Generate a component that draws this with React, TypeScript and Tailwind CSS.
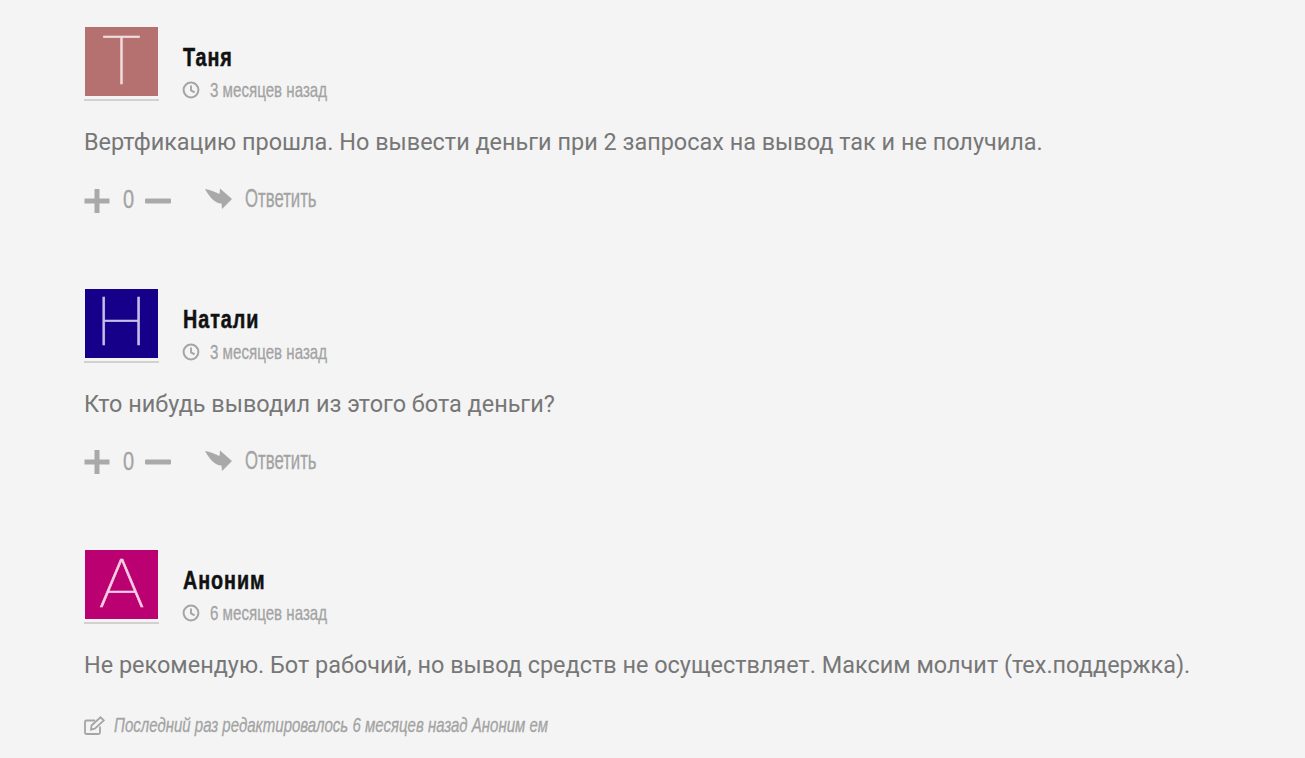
const cond = { fontFamily: '"Liberation Sans Narrow","Liberation Sans",sans-serif' };

function Clock() {
  return (
    <svg width="18" height="18" viewBox="0 0 18 18" fill="none" stroke="#a5a5a5" strokeWidth="2" className="shrink-0 -ml-[1px]">
      <circle cx="9" cy="9" r="7.4" />
      <path d="M9 4.4V9.4L12.6 11.4" strokeWidth="1.900" />
    </svg>
  );
}

function Plus() {
  return (
    <svg width="26" height="26" viewBox="0 0 26 26" fill="#a9a9a9" className="shrink-0">
      <path d="M10.500 1h5v9.500H25.500v5H15.500V25h-5V15.500H0.500v-5h10z" />
    </svg>
  );
}

function Minus() {
  return (
    <svg width="26" height="26" viewBox="0 0 26 26" fill="#a9a9a9" className="shrink-0">
      <rect x="0" y="10.500" width="26" height="5" rx="1" />
    </svg>
  );
}

function Reply() {
  return (
    <svg width="27" height="24" viewBox="0 0 27 24" fill="#a9a9a9" className="shrink-0">
      <path d="M0 2C5 2.500 10 5 14.500 7L15 1.500L27 12L17 22L16.500 16.500C9.500 16.500 4 9 0 2z" />
    </svg>
  );
}

function Edit() {
  return (
    <svg width="21" height="19" viewBox="0 0 21 19" fill="none" stroke="#a5a5a5" strokeWidth="1.800" className="shrink-0">
      <path d="M16 10.500V16.500a1.500 1.500 0 0 1-1.500 1.500H2.500A1.500 1.500 0 0 1 1 16.500V6a1.500 1.500 0 0 1 1.500-1.500H11" />
      <path d="M7.500 9.500L16.500 1.300L19.800 4.300L10.800 12.700L7 13.500z" />
    </svg>
  );
}

function Comment({ name, when, letter, color, letterClass, text, actions = true }: {
  name: string; when: string; letter: string; color: string; letterClass: string; text: string; actions?: boolean;
}) {
  return (
    <div className="flex flex-col">
      <div className="flex items-start">
        <div className="w-[75px] border-b-2 border-[#d5d0d0] pb-[3px] shrink-0 flex justify-center">
          <div className={`w-[73px] h-[69px] flex items-center justify-center ${color}`}>
            <span className={`text-[66px] leading-none [-webkit-text-stroke:0.5px_currentColor] ${letterClass}`} style={{ fontFamily: 'Roboto, sans-serif', fontWeight: 100 }}>
              {letter}
            </span>
          </div>
        </div>
        <div className="ml-[24px] pt-[16px] flex flex-col">
          <div className="h-[30px] flex items-center text-[25px] font-bold text-[#111] origin-left scale-x-[0.79] whitespace-nowrap tracking-[1.2px] [-webkit-text-stroke:0.5px_#111]" style={cond}>
            {name}
          </div>
          <div className="flex items-center h-[24px] mt-[5px]">
            <Clock />
            <span className="ml-[10px] text-[21px] text-[#a3a3a3] whitespace-nowrap scale-x-[0.72] origin-left [-webkit-text-stroke:0.3px_#a3a3a3]" style={cond}>{when}</span>
          </div>
        </div>
      </div>
      <p className="mt-[25px] text-[23.45px] leading-[30px] text-[#777] whitespace-nowrap" style={{ fontFamily: 'Roboto, sans-serif' }}>{text}</p>
      {actions && (
        <div className="mt-[27px] flex items-center h-[30px]">
          <span className="mt-[3px] -ml-[0.5px]"><Plus /></span>
          <span className="ml-[13px] w-[22px] text-[25px] text-[#a3a3a3] scale-x-[0.8] origin-left mt-[2px] [-webkit-text-stroke:0.3px_#a3a3a3]" style={cond}>0</span>
          <span className="mt-[3px]"><Minus /></span>
          <span className="ml-[34px]"><Reply /></span>
          <span className="ml-[13px] text-[25px] text-[#a3a3a3] scale-x-[0.67] origin-left whitespace-nowrap [-webkit-text-stroke:0.3px_#a3a3a3]" style={cond}>Ответить</span>
        </div>
      )}
    </div>
  );
}

export default function App() {
  return (
    <div className="w-[1305px] h-[758px] overflow-hidden bg-[#f4f4f4] pl-[84px] pt-[27px] flex flex-col gap-[74.5px]">
      <Comment name="Таня" when="3 месяцев назад" letter="T" color="bg-[#b57170]" letterClass="text-[#f0dcdc]"
        text="Вертфикацию прошла. Но вывести деньги при 2 запросах на вывод так и не получила." />
      <Comment name="Натали" when="3 месяцев назад" letter="H" color="bg-[#16008a]" letterClass="text-[#c5bfe6] scale-x-[1.1]"
        text="Кто нибудь выводил из этого бота деньги?" />
      <div className="flex flex-col">
        <Comment name="Аноним" when="6 месяцев назад" letter="A" color="bg-[#bb0071]" letterClass="text-[#f6cfe4] scale-x-[1.15]" actions={false}
          text="Не рекомендую. Бот рабочий, но вывод средств не осуществляет. Максим молчит (тех.поддержка)." />
        <div className="mt-[33px] flex items-center h-[24px]">
          <Edit />
          <span className="ml-[9px] text-[21px] italic text-[#a3a3a3] whitespace-nowrap scale-x-[0.715] origin-left [-webkit-text-stroke:0.3px_#a3a3a3]" style={cond}>Последний раз редактировалось 6 месяцев назад Аноним ем</span>
        </div>
      </div>
    </div>
  );
}
